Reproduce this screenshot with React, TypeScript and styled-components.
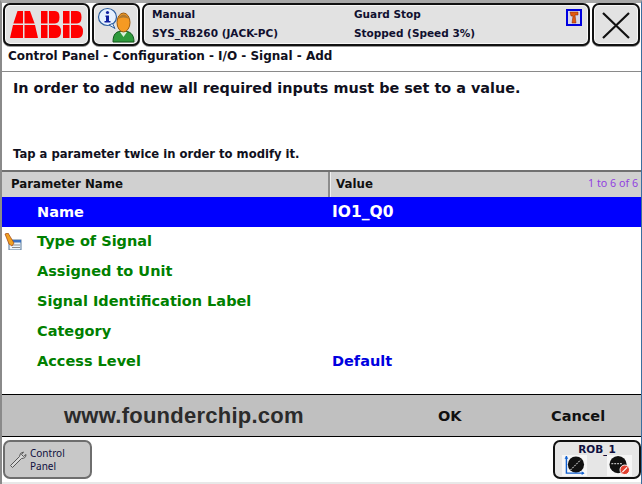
import React from 'react'
import styled, { createGlobalStyle } from 'styled-components'

const GlobalStyle = createGlobalStyle`
  html, body {
    margin: 0;
    padding: 0;
    background: #fff;
  }
  * {
    box-sizing: border-box;
  }
`

const Screen = styled.div`
  width: 642px;
  height: 484px;
  display: flex;
  flex-direction: column;
  overflow: hidden;
  background: #fff;
  border-top: 3px solid #a8a8a8;
  border-left: 2px solid #8a8a8a;
  border-right: 1px solid #3a6f9f;
  font-family: 'DejaVu Sans', Verdana, sans-serif;
  color: #000;
`

const TopBar = styled.div`
  display: flex;
  gap: 2px;
  height: 43px;
  flex: none;
  padding-left: 1px;
`

const TopButton = styled.div<{ $w: number }>`
  width: ${({ $w }) => $w}px;
  flex: none;
  display: flex;
  align-items: center;
  justify-content: center;
  background: #e2e2e2;
  border: 2px solid #111;
  border-radius: 7px;
  box-shadow: inset 0 0 0 1px #f8f8f8, 0 1px 0 #999;
`

const StatusPanel = styled(TopButton)`
  display: grid;
  grid-template-columns: 202px 1fr 22px;
  align-items: center;
  justify-content: stretch;
  padding: 0 6px 2px 8px;
  font-size: 10.5px;
  font-weight: 700;
  color: #101030;
  line-height: 19px;
`

const StatusColumn = styled.div`
  display: flex;
  flex-direction: column;
`

const RobotBadge = styled.div`
  width: 16px;
  height: 17px;
  margin-top: -14px;
  justify-self: end;
  border: 2px solid #0000e0;
  background: #d8d8e8;
  display: flex;
  align-items: center;
  justify-content: center;
`

const Breadcrumb = styled.div`
  height: 26px;
  flex: none;
  padding: 3px 0 0 6px;
  font-size: 12px;
  font-weight: 700;
  color: #101020;
  border-bottom: 1px solid #8a8a8a;
  white-space: nowrap;
`

const Message = styled.div`
  height: 100px;
  flex: none;
  padding: 8px 0 0 11px;
  display: flex;
  flex-direction: column;
  justify-content: space-between;
  border-bottom: 2px solid #707070;
`

const MessageTitle = styled.div`
  font-size: 14.4px;
  font-weight: 700;
  color: #101020;
`

const MessageHint = styled.div`
  font-size: 11.6px;
  font-weight: 700;
  color: #101020;
  padding-bottom: 9px;
`

const TableHead = styled.div`
  height: 25px;
  flex: none;
  display: flex;
  background: #d0d0d0;
  font-size: 11.8px;
  font-weight: 700;
  line-height: 24px;
  color: #101010;
`

const HeadCell = styled.div<{ $w?: number }>`
  position: relative;
  padding-left: ${({ $w }) => ($w ? 9 : 5)}px;
  ${({ $w }) => ($w ? `width: ${$w}px;` : 'flex: 1;')}
  ${({ $w }) => ($w ? 'border-right: 2px solid #8c8c8c;' : 'border-left: 1px solid #f0f0f0;')}
`

const Paging = styled.span`
  position: absolute;
  right: 3px;
  top: -1px;
  font-family: 'Noto Sans', sans-serif;
  font-weight: 400;
  font-size: 10.7px;
  color: #9040e0;
`

const Rows = styled.div`
  flex: 1;
  display: flex;
  flex-direction: column;
`

const Row = styled.div<{ $selected?: boolean }>`
  height: 30px;
  flex: none;
  display: grid;
  grid-template-columns: 35px 295px 1fr;
  align-items: center;
  padding-bottom: ${({ $selected }) => ($selected ? 0 : 2)}px;
  font-size: 14.5px;
  font-weight: 700;
  background: ${({ $selected }) => ($selected ? '#0000ff' : '#fff')};
  color: ${({ $selected }) => ($selected ? '#fff' : '#008000')};
`

const RowIcon = styled.div`
  display: flex;
  padding-left: 2px;
`

const RowValue = styled.div<{ $selected?: boolean }>`
  color: ${({ $selected }) => ($selected ? '#fff' : '#0000e0')};
  ${({ $selected }) => ($selected ? 'font-size: 15.5px;' : '')}
`

const ActionBar = styled.div`
  height: 43px;
  flex: none;
  display: grid;
  grid-template-columns: 62px 374px 113px 1fr;
  align-items: center;
  background: #c0c0c0;
  border-top: 1px solid #000;
  border-bottom: 1px solid #000;
`

const Watermark = styled.div`
  grid-column: 2;
  font-family: 'Liberation Sans', Arial, sans-serif;
  font-size: 22px;
  font-weight: 700;
  color: #2b2b2b;
  letter-spacing: 0.25px;
`

const ActionLabel = styled.div`
  font-size: 14.5px;
  font-weight: 700;
  color: #101010;
`

const TaskBar = styled.div`
  height: 47px;
  flex: none;
  display: flex;
  justify-content: space-between;
  padding: 3px 0 0 1px;
  border-bottom: 2px solid #e8e8e8;
`

const TaskButton = styled.div`
  width: 89px;
  height: 39px;
  display: flex;
  align-items: center;
  gap: 2px;
  padding-left: 4px;
  background: #c8c8c8;
  border: 2px solid #6e6e6e;
  border-radius: 7px;
  font-family: 'Noto Sans', sans-serif;
  font-size: 10px;
  line-height: 13px;
  color: #101040;
`

const QuickSet = styled.div`
  width: 88px;
  height: 39px;
  display: flex;
  flex-direction: column;
  align-items: center;
  padding-top: 1px;
  background: #e6e6e6;
  border: 2px solid #111;
  border-radius: 7px;
  font-size: 10.5px;
  font-weight: 700;
  line-height: 12px;
  color: #101040;
`

const QuickIcons = styled.div`
  width: 70px;
  display: flex;
  justify-content: space-between;
`

const QuickIcon = styled.div`
  width: 25px;
  height: 21px;
  background: #f6f6f6;
  display: flex;
  align-items: center;
  justify-content: center;
`

const AbbLogo = () => (
  <svg width="73" height="27" viewBox="0 0 73 27">
    <g fill="#ff0000">
      <polygon points="7.5,0 13,0 13,12.5 3.4,12.5" />
      <polygon points="3,14 13,14 13,27 0,27" />
      <polygon points="14.5,0 20,0 24.6,12.5 14.5,12.5" />
      <polygon points="14.5,14 25,14 28,27 14.5,27" />
      <path d="M31 0h6.5v12.5H31zM31 14h6.5v13H31z" />
      <path d="M39 0h6q4.5 0 4.5 6.2T45 12.5h-6zM39 14h7q5 0 5 6.5T46 27h-7z" />
      <path d="M53 0h6.5v12.5H53zM53 14h6.5v13H53z" />
      <path d="M61 0h6q4.5 0 4.5 6.2T67 12.5h-6zM61 14h7q5 0 5 6.5T68 27h-7z" />
    </g>
  </svg>
)

const InfoIcon = () => (
  <svg width="38" height="36" viewBox="0 0 38 36">
    <path d="M16 35c0-8 3-11 10-11s11 3 11 11z" fill="#2f9a3c" stroke="#14551c" />
    <path d="M23 25l3.5 5 3.5-5z" fill="#d8f0d8" />
    <ellipse cx="26.5" cy="15.5" rx="6.5" ry="9.5" fill="#f59a23" stroke="#9a5a10" />
    <path d="M20.5 12q6-9 12 0-6-3-12 0z" fill="#b07a30" />
    <ellipse cx="10.5" cy="10" rx="9" ry="8.5" fill="#e6f1ff" stroke="#2f5f9f" strokeWidth="1.2" />
    <path d="M12 18l6 3.5-2.5-5z" fill="#e6f1ff" stroke="#2f5f9f" />
    <circle cx="10.5" cy="5.5" r="1.6" fill="#1020a0" />
    <path d="M8.5 8.5h3.5v5.5h1.5v1.5h-6V14h1.5v-4H8.5z" fill="#1020a0" />
  </svg>
)

const CloseIcon = () => (
  <svg width="30" height="30" viewBox="0 0 30 30">
    <path d="M2 3l26 25M28 3L2 28" stroke="#111" strokeWidth="2.2" fill="none" />
  </svg>
)

const RobotIcon = () => (
  <svg width="12" height="13" viewBox="0 0 12 13">
    <path d="M2 1h8v3H7l1 8H4l1-7H3z" fill="#e05a10" stroke="#802000" strokeWidth="0.5" />
  </svg>
)

const EditIcon = () => (
  <svg width="18" height="17" viewBox="0 0 18 17">
    <rect x="5" y="7" width="12" height="10" fill="#eef4fa" stroke="#5a7a9a" />
    <rect x="5" y="7" width="12" height="2.5" fill="#3a70c0" />
    <path d="M8 12h8M8 14.5h8" stroke="#8a8a8a" />
    <path d="M1 1l3-1 6 10-2 3-3-2z" fill="#f0a020" stroke="#a04010" strokeWidth="0.7" />
  </svg>
)

const WrenchIcon = () => (
  <svg width="19" height="19" viewBox="0 0 19 19">
    <path
      d="M1.5 15.5L10.5 6.5Q10.5 2.5 14.5 2L12.5 4.5 14.5 6.5 17 4.5Q17 8.5 12.5 8.5L3.5 17.5z"
      fill="#d8d8d8"
      stroke="#555"
      strokeWidth="1"
    />
  </svg>
)

const AxisIcon = () => (
  <svg width="22" height="21" viewBox="0 0 22 22">
    <circle cx="12" cy="10" r="8.5" fill="#111" />
    <path d="M6 16L17 5" stroke="#fff" strokeDasharray="2 1" />
    <path d="M2 1v18h18" stroke="#1060d0" strokeWidth="1.5" fill="none" />
    <path d="M0 4l2-3 2 3zM18 17l3 2-3 2z" fill="#1060d0" />
  </svg>
)

const IncrementIcon = () => (
  <svg width="23" height="21" viewBox="0 0 23 22">
    <circle cx="10" cy="10" r="9" fill="#111" />
    <path d="M3 9h11" stroke="#bbb" strokeDasharray="2 1" strokeWidth="1.5" />
    <circle cx="17" cy="15.5" r="5" fill="#e04030" stroke="#fff" />
    <path d="M14.5 18l5-5" stroke="#fff" strokeWidth="1.3" />
  </svg>
)

const rows = [
  { name: 'Name', value: 'IO1_Q0', selected: true },
  { name: 'Type of Signal', value: '', editing: true },
  { name: 'Assigned to Unit', value: '' },
  { name: 'Signal Identification Label', value: '' },
  { name: 'Category', value: '' },
  { name: 'Access Level', value: 'Default' }
]

export default function App() {
  return (
    <Screen>
      <GlobalStyle />
      <TopBar>
        <TopButton $w={87}>
          <AbbLogo />
        </TopButton>
        <TopButton $w={48}>
          <InfoIcon />
        </TopButton>
        <StatusPanel $w={448}>
          <StatusColumn>
            <span>Manual</span>
            <span>SYS_RB260 (JACK-PC)</span>
          </StatusColumn>
          <StatusColumn>
            <span>Guard Stop</span>
            <span>Stopped (Speed 3%)</span>
          </StatusColumn>
          <RobotBadge>
            <RobotIcon />
          </RobotBadge>
        </StatusPanel>
        <TopButton $w={48}>
          <CloseIcon />
        </TopButton>
      </TopBar>
      <Breadcrumb>Control Panel - Configuration - I/O - Signal - Add</Breadcrumb>
      <Message>
        <MessageTitle>In order to add new all required inputs must be set to a value.</MessageTitle>
        <MessageHint>Tap a parameter twice in order to modify it.</MessageHint>
      </Message>
      <TableHead>
        <HeadCell $w={328}>Parameter Name</HeadCell>
        <HeadCell>
          Value
          <Paging>1 to 6 of 6</Paging>
        </HeadCell>
      </TableHead>
      <Rows>
        {rows.map((row) => (
          <Row key={row.name} $selected={row.selected}>
            <RowIcon>{row.editing && <EditIcon />}</RowIcon>
            <div>{row.name}</div>
            <RowValue $selected={row.selected}>{row.value}</RowValue>
          </Row>
        ))}
      </Rows>
      <ActionBar>
        <Watermark>www.founderchip.com</Watermark>
        <ActionLabel>OK</ActionLabel>
        <ActionLabel>Cancel</ActionLabel>
      </ActionBar>
      <TaskBar>
        <TaskButton>
          <WrenchIcon />
          <div>
            Control
            <br />
            Panel
          </div>
        </TaskButton>
        <QuickSet>
          ROB_1
          <QuickIcons>
            <QuickIcon>
              <AxisIcon />
            </QuickIcon>
            <QuickIcon>
              <IncrementIcon />
            </QuickIcon>
          </QuickIcons>
        </QuickSet>
      </TaskBar>
    </Screen>
  )
}
